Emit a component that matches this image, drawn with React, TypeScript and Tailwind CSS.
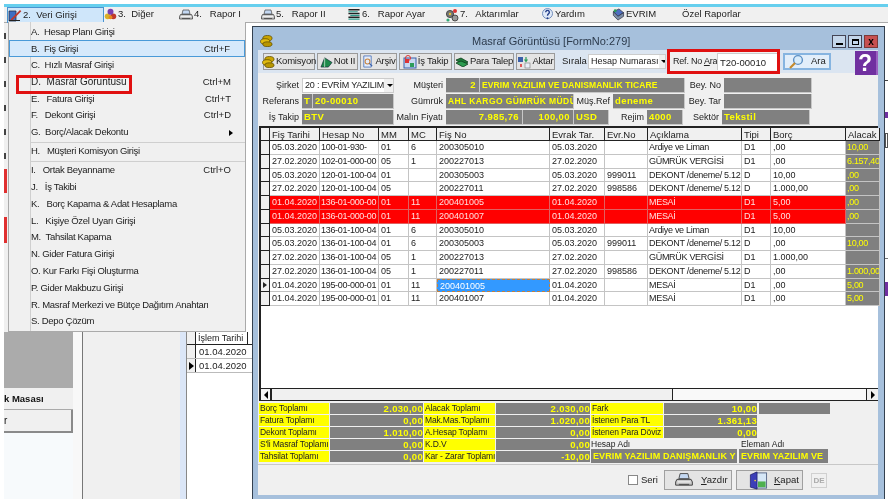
import React from "react";

const sans = "[font-family:Liberation_Sans,sans-serif]";
const bold = "[font-family:Liberation_Sans,sans-serif] font-bold";

const Printer = ({ className = "w-[14px] h-[12px]" }: { className?: string }) => (
  <svg viewBox="0 0 28 24" className={`${className} shrink-0`}>
    <path d="M8 2h12l2 8H6z" fill="#c4d8f2" stroke="#444" strokeWidth="1.4" />
    <path d="M3 11h22l2 4v5H1v-5z" fill="#c9c9c9" stroke="#333" strokeWidth="1.4" />
    <path d="M4 15h20" stroke="#fff" strokeWidth="1.4" />
    <rect x="6" y="18" width="16" height="2" fill="#555" />
  </svg>
);

const PencilIcon = () => (
  <svg viewBox="0 0 14 14" className="w-[14px] h-[14px] shrink-0">
    <path d="M1 3h7v10H1z" fill="#3d6fc4" stroke="#223" strokeWidth=".7" />
    <path d="M3 11l9-9 1.3 1.3-9 9L2 13z" fill="#c0392b" />
    <path d="M1 12.5h11" stroke="#222" strokeWidth="1" />
  </svg>
);

const Balls = () => (
  <svg viewBox="0 0 14 14" className="w-[13px] h-[13px] shrink-0">
    <circle cx="4" cy="9" r="3.2" fill="#d9b02a" />
    <circle cx="10" cy="9" r="3.2" fill="#c0392b" />
    <circle cx="7" cy="4" r="3.2" fill="#7a3fb0" />
    <circle cx="7" cy="10" r="2" fill="#e88a1f" />
  </svg>
);

const Stack = () => (
  <svg viewBox="0 0 14 14" className="w-[14px] h-[13px] shrink-0">
    <path d="M1 2h12M1 6h12M1 10h12" stroke="#222" strokeWidth="1.6" />
    <path d="M1 4h10M3 8h10M1 12h12" stroke="#2e9c8a" strokeWidth="1.2" />
  </svg>
);

const Gears = () => (
  <svg viewBox="0 0 14 14" className="w-[14px] h-[14px] shrink-0">
    <circle cx="5" cy="6" r="3.6" fill="#777" stroke="#333" strokeWidth=".8" />
    <circle cx="10" cy="10" r="3" fill="#999" stroke="#333" strokeWidth=".8" />
    <circle cx="10" cy="3" r="2" fill="#d33" />
    <circle cx="3" cy="12" r="1.6" fill="#3a7" />
    <circle cx="5" cy="6" r="1.2" fill="#e5c33c" />
  </svg>
);

const HelpIcon = () => (
  <svg viewBox="0 0 14 14" className="w-[13px] h-[13px] shrink-0">
    <circle cx="7" cy="6" r="5.4" fill="#dfe9f8" stroke="#6b88b8" />
    <path d="M5 4.5a2 2 0 1 1 3 1.8c-.8.5-1 1-1 2" fill="none" stroke="#27408b" strokeWidth="1.5" />
    <circle cx="7" cy="11" r="1" fill="#27408b" />
  </svg>
);

const BookIcon = () => (
  <svg viewBox="0 0 14 14" className="w-[14px] h-[13px] shrink-0">
    <path d="M2 4l6-3 5 4-6 4z" fill="#4f6fc0" stroke="#223" strokeWidth=".7" />
    <path d="M2 4v4l5 5 6-4V5L7 9z" fill="#7d8fa8" stroke="#223" strokeWidth=".7" />
    <circle cx="4" cy="3" r="1.6" fill="#2d9c5a" />
  </svg>
);

const Coins = ({ className = "w-[13px] h-[12px]" }: { className?: string }) => (
  <svg viewBox="0 0 14 13" className={`${className} shrink-0`}>
    <ellipse cx="8" cy="3.5" rx="5" ry="3" fill="#c9a400" stroke="#5c4a00" strokeWidth=".8" />
    <ellipse cx="5.5" cy="7" rx="5" ry="3" fill="#e0bb10" stroke="#5c4a00" strokeWidth=".8" />
    <ellipse cx="8" cy="10" rx="5" ry="2.6" fill="#b89600" stroke="#5c4a00" strokeWidth=".8" />
  </svg>
);

const TentIcon = () => (
  <svg viewBox="0 0 14 13" className="w-[13px] h-[12px] shrink-0">
    <path d="M1 12L5 2l8 5-4 5z" fill="#1f8a4c" stroke="#123" strokeWidth=".7" />
    <path d="M5 2v10" stroke="#cfe8d8" strokeWidth=".8" />
  </svg>
);

const DocIcon = () => (
  <svg viewBox="0 0 14 14" className="w-[13px] h-[13px] shrink-0">
    <path d="M3 1h8v12H3z" fill="#e4ecfa" stroke="#5a7ec0" />
    <circle cx="7" cy="7" r="2.6" fill="none" stroke="#c9823a" strokeWidth="1.1" />
    <path d="M9 9l3 3" stroke="#3a5fa8" strokeWidth="1.4" />
  </svg>
);

const GridIcon = () => (
  <svg viewBox="0 0 14 14" className="w-[14px] h-[14px] shrink-0">
    <rect x="1" y="3" width="12" height="10" fill="#c8d8f0" stroke="#3a5fa8" />
    <rect x="2" y="4" width="4" height="4" fill="#d33" />
    <rect x="7" y="8" width="4" height="4" fill="#2d9c5a" />
    <circle cx="5" cy="3" r="2.5" fill="none" stroke="#d33" />
  </svg>
);

const MoneyIcon = () => (
  <svg viewBox="0 0 14 10" className="w-[14px] h-[10px] shrink-0">
    <path d="M1 3l5-2 7 4-5 3z" fill="#1d7a3a" stroke="#0c3d1c" strokeWidth=".8" />
    <path d="M1 6l5-2 7 3-5 3z" fill="#2c9c50" stroke="#0c3d1c" strokeWidth=".8" />
  </svg>
);

const TransferIcon = () => (
  <svg viewBox="0 0 14 14" className="w-[14px] h-[14px] shrink-0">
    <rect x="1" y="2" width="5" height="5" fill="#3a5fa8" />
    <rect x="8" y="8" width="5" height="5" fill="#e9eef8" stroke="#777" strokeWidth=".6" />
    <path d="M9 2v4M7.5 4.5L9 6.5l1.5-2" stroke="#2d9c5a" fill="none" strokeWidth="1.2" />
    <path d="M4 9v3" stroke="#d33" strokeWidth="1.6" />
  </svg>
);

const Magnifier = () => (
  <svg viewBox="0 0 16 16" className="w-[16px] h-[16px] shrink-0">
    <circle cx="10" cy="6" r="4.4" fill="#d8ecfb" stroke="#5d90c4" strokeWidth="1.4" />
    <path d="M7 9l-5 5" stroke="#c58a2c" strokeWidth="2.2" />
  </svg>
);

const Door = () => (
  <svg viewBox="0 0 20 20" className="w-[20px] h-[19px] shrink-0">
    <rect x="7" y="2" width="12" height="16" fill="#d5e6f6" stroke="#5a6a8a" />
    <rect x="10" y="11" width="8" height="6" fill="#4fb04f" />
    <path d="M2 4l7-3v18l-7-2z" fill="#3b3fb8" stroke="#20226b" strokeWidth=".8" />
    <circle cx="7" cy="10" r=".9" fill="#f0d040" />
  </svg>
);

const menuBar = [
  { w: "w-[97px]", icon: <PencilIcon />, label: "2.  Veri Girişi", active: true },
  { w: "w-[75px]", icon: <Balls />, label: "3.  Diğer" },
  { w: "w-[82px]", icon: <Printer />, label: "4.   Rapor I" },
  { w: "w-[86px]", icon: <Printer />, label: "5.   Rapor II" },
  { w: "w-[98px]", icon: <Stack />, label: "6.   Rapor Ayar" },
  { w: "w-[96px]", icon: <Gears />, label: "7.   Aktarımlar" },
  { w: "w-[70px]", icon: <HelpIcon />, label: "Yardım" },
  { w: "w-[71px]", icon: <BookIcon />, label: "EVRIM" },
  { w: "w-[90px]", icon: null, label: "Özel Raporlar" },
];

type MenuEntry = { label: string; key?: string; sub?: boolean; hot?: boolean; sepAfter?: boolean; wide?: boolean };

const menuItems: MenuEntry[] = [
  { label: "A.  Hesap Planı Girişi" },
  { label: "B.  Fiş Girişi", key: "Ctrl+F", hot: true },
  { label: "C.  Hızlı Masraf Girişi" },
  { label: "D.  Masraf Görüntüsü", key: "Ctrl+M", wide: true },
  { label: "E.   Fatura Girişi", key: "Ctrl+T" },
  { label: "F.   Dekont Girişi", key: "Ctrl+D" },
  { label: "G.  Borç/Alacak Dekontu", sub: true, sepAfter: true },
  { label: "H.   Müşteri Komisyon Girişi", sepAfter: true },
  { label: "I.   Ortak Beyanname", key: "Ctrl+O" },
  { label: "J.   İş Takibi" },
  { label: "K.   Borç Kapama & Adat Hesaplama" },
  { label: "L.   Kişiye Özel Uyarı Girişi" },
  { label: "M.  Tahsilat Kapama" },
  { label: "N. Gider Fatura Girişi" },
  { label: "O. Kur Farkı Fişi Oluşturma" },
  { label: "P. Gider Makbuzu Girişi" },
  { label: "R. Masraf Merkezi ve Bütçe Dağıtım Anahtarı" },
  { label: "S. Depo Çözüm" },
];

const dek = "DEKONT /deneme/ 5.12";
const rows = [
  ["05.03.2020", "100-01-930-", "01", "6", "200305010", "05.03.2020", "", "Ardiye ve Liman", "D1", ",00", "10,00"],
  ["27.02.2020", "102-01-000-00", "05", "1", "200227013", "27.02.2020", "", "GÜMRÜK VERGİSİ", "D1", ",00", "6.157,40"],
  ["05.03.2020", "120-01-100-04", "01", "", "200305003", "05.03.2020", "999011", dek, "D", "10,00", ",00"],
  ["27.02.2020", "120-01-100-04", "05", "", "200227011", "27.02.2020", "998586", dek, "D", "1.000,00", ",00"],
  ["01.04.2020", "136-01-000-00", "01", "11", "200401005", "01.04.2020", "", "MESAİ", "D1", "5,00", ",00"],
  ["01.04.2020", "136-01-000-00", "01", "11", "200401007", "01.04.2020", "", "MESAİ", "D1", "5,00", ",00"],
  ["05.03.2020", "136-01-100-04", "01", "6", "200305010", "05.03.2020", "", "Ardiye ve Liman", "D1", "10,00", ""],
  ["05.03.2020", "136-01-100-04", "01", "6", "200305003", "05.03.2020", "999011", dek, "D", ",00", "10,00"],
  ["27.02.2020", "136-01-100-04", "05", "1", "200227013", "27.02.2020", "", "GÜMRÜK VERGİSİ", "D1", "1.000,00", ""],
  ["27.02.2020", "136-01-100-04", "05", "1", "200227011", "27.02.2020", "998586", dek, "D", ",00", "1.000,00"],
  ["01.04.2020", "195-00-000-01", "01", "11", "200401005", "01.04.2020", "", "MESAİ", "D1", ",00", "5,00"],
  ["01.04.2020", "195-00-000-01", "01", "11", "200401007", "01.04.2020", "", "MESAİ", "D1", ",00", "5,00"],
];
const headers = ["Fiş Tarihi", "Hesap No", "MM", "MC", "Fiş No", "Evrak Tar.", "Evr.No", "Açıklama", "Tipi", "Borç", "Alacak"];
const gridCols = "grid grid-cols-[9px_50px_59px_30px_28px_113px_55px_43px_94px_29px_75px_34px]";

const Field = ({
  w,
  text,
  right,
  size = "text-[9.5px] tracking-[0.4px]",
}: {
  w: string;
  text?: string;
  right?: boolean;
  size?: string;
}) => (
  <div
    className={`${w} ${bold} ${right ? "text-right pr-[3px]" : "pl-[2px]"} ${size} h-[15px] leading-[14px] bg-[#808080] text-[#ffff00] border-b border-r border-[#c8c8c8] overflow-hidden whitespace-nowrap shrink-0`}
  >
    {text}
  </div>
);

const Label = ({ w, text }: { w: string; text: string }) => (
  <div className={`${w} text-right pr-[3px] text-[9px] leading-[15px] shrink-0 whitespace-nowrap`}>{text}</div>
);

const ToolBtn = ({ w, icon, text }: { w: string; icon: React.ReactNode; text: string }) => (
  <div className={`${w} h-[17px] flex items-center justify-center gap-[1px] bg-[#e4e4e4] border border-[#9a9a9a] text-[9.5px] tracking-[-0.2px] whitespace-nowrap`}>
    {icon}
    <span>{text}</span>
  </div>
);

const summary = [
  ["Borç Toplamı", "2.030,00", "Alacak Toplamı", "2.030,00", "Fark", "10,00"],
  ["Fatura Toplamı", "0,00", "Mak.Mas.Toplamı", "1.020,00", "İstenen Para TL", "1.361,13"],
  ["Dekont Toplamı", "1.010,00", "A.Hesap Toplamı", "0,00", "İstenen Para Döviz", "0,00"],
  ["S'li Masraf Toplamı", "0,00", "K.D.V", "0,00", "", ""],
  ["Tahsilat Toplamı", "0,00", "Kar - Zarar Toplamı", "-10,00", "", ""],
];

const YellowCell = ({ w, text }: { w: string; text: string }) => (
  <div className={`${w} h-[11px] leading-[11px] bg-[#ffff00] text-[#222] text-[8.5px] tracking-[-0.15px] pl-[1px] whitespace-nowrap overflow-hidden shrink-0`}>{text}</div>
);

const GrayCell = ({ w, text }: { w: string; text: string }) => (
  <div className={`${w} h-[11px] leading-[11px] bg-[#808080] text-[#ffff00] ${bold} text-[9.5px] tracking-[0.3px] text-right whitespace-nowrap overflow-hidden shrink-0`}>{text}</div>
);

export default function App() {
  return (
    <div className={`relative w-[888px] h-[499px] overflow-hidden bg-white ${sans} text-[10px] text-[#222] blur-[0.2px]`}>
      {/* window behind the menu */}
      <div className="absolute left-[4px] top-[22px] w-[248px] h-[477px] flex bg-[#f0f0f0]">
        <div className="w-[69px] flex flex-col">
          <div className="flex flex-col gap-[18px] pt-[11px] shrink-0 h-[310px]">
            {[0, 1, 2, 3, 4, 5].map((i) => (
              <div key={i} className="w-[2px] h-[6px] bg-[#444]" />
            ))}
            <div className="w-[3px] h-[24px] bg-[#e03030] -mt-[8px]" />
            <div className="w-[3px] h-[26px] bg-[#e03030] mt-[6px]" />
          </div>
          <div className="h-[56px] bg-[#ababab]" />
          <div className={`h-[22px] bg-[#f0f0f0] border-b border-[#aaa] ${bold} text-[9.5px] leading-[22px] whitespace-nowrap text-[#111]`}>k Masası</div>
          <div className="h-[23px] bg-[#f0f0f0] border-b-2 border-r-2 border-[#8a8a8a] leading-[22px] text-[#111]">r</div>
          <div className="flex-1 bg-[#f7fafc]" />
        </div>
        <div className="w-[10px] bg-[#f8f8f8] border-r border-[#777]" />
        <div className="w-[97px]" />
        <div className="w-[6px] bg-[#dbe6f7]" />
        <div className="flex-1 bg-white border-l border-[#888] pt-[310px]">
          <div className="flex h-[13px] leading-[13px] border-b border-[#222] text-[9px]">
            <div className="w-[9px] bg-[#f0f0f0] border-r border-[#222]" />
            <div className="pl-[2px] whitespace-nowrap border-r border-[#222] w-[52px] overflow-hidden">İşlem Tarihi</div>
          </div>
          {[0, 1].map((i) => (
            <div key={i} className="flex h-[14px] leading-[14px] border-b border-[#bbb] text-[9.5px]">
              <div className="w-[9px] bg-[#f0f0f0] border-r border-[#222] flex items-center justify-center">
                {i === 1 && <div className="border-y-[4px] border-y-transparent border-l-[5px] border-l-black" />}
              </div>
              <div className="pl-[3px]">01.04.2020</div>
            </div>
          ))}
        </div>
      </div>

      {/* cyan strip and menu bar */}
      <div className="absolute left-[4px] top-[4px] right-0 h-[3px] bg-[#66cfee]" />
      <div className="absolute left-[4px] top-[7px] right-0 h-[16px] bg-[#f0f0f0] border-b border-[#aaa] flex pl-[3px] text-[9.5px]">
        {menuBar.map((m) => (
          <div
            key={m.label}
            className={`${m.w} flex items-center gap-[1px] shrink-0 whitespace-pre ${m.active ? "bg-[#cfe6fa] border border-[#4a93cf] h-[16px]" : ""}`}
          >
            {m.icon}
            <span>{m.label}</span>
          </div>
        ))}
      </div>

      {/* main window */}
      <div className="absolute left-[252px] top-[26px] w-[633px] h-[473px] bg-[#a6c0dc] border-l border-t border-r border-[#33404f] flex flex-col pl-[5px] pr-[6px] pb-[4px]">
        <div className="h-[23px] flex items-center relative shrink-0">
          <div className="ml-[2px] mt-[4px]"><Coins /></div>
          <div className="absolute left-[214px] top-[6px] text-[11px] leading-[16px] text-[#2c3a4c] whitespace-nowrap">Masraf Görüntüsü [FormNo:279]</div>
          <div className="absolute right-0 top-[8px] flex gap-[2px]">
            <div className="w-[14px] h-[13px] bg-[#c4d6ea] border border-[#445] flex items-end justify-center pb-[2px]"><div className="w-[7px] h-[2px] bg-black" /></div>
            <div className="w-[14px] h-[13px] bg-[#c4d6ea] border border-[#445] flex items-center justify-center"><div className="w-[7px] h-[6px] border border-t-2 border-black" /></div>
            <div className="w-[14px] h-[13px] bg-[#c75050] border border-[#7a3a3a] text-black text-[10px] leading-[11px] font-bold text-center">x</div>
          </div>
        </div>

        <div className="flex-1 min-h-0 bg-[#f0f0f0] flex flex-col">
          {/* toolbar */}
          <div className="h-[23px] relative flex items-center pl-[5px] gap-[2px] shrink-0 bg-[#dbe5f1]">
            <ToolBtn w="w-[52px]" icon={<Coins />} text="Komisyon" />
            <ToolBtn w="w-[41px]" icon={<TentIcon />} text="Not II" />
            <ToolBtn w="w-[37px]" icon={<DocIcon />} text="Arşiv" />
            <ToolBtn w="w-[53px]" icon={<GridIcon />} text="İş Takip" />
            <ToolBtn w="w-[60px]" icon={<MoneyIcon />} text="Para Talep" />
            <ToolBtn w="w-[39px]" icon={<TransferIcon />} text="Aktar" />
            <span className="ml-[5px] w-[24px] text-[9.5px]">Sırala</span>
            <div className="w-[78px] h-[15px] bg-white border border-[#ccc] flex items-center text-[9px] pl-[2px] whitespace-nowrap overflow-hidden">
              <span className="flex-1">Hesap Numarası</span>
              <span className="w-[11px] h-full bg-[#f0f0f0] flex items-center justify-center shrink-0"><span className="border-x-[3px] border-x-transparent border-t-[3px] border-t-black" /></span>
            </div>
            <div className="-ml-[1px] w-[113px] h-[25px] border-[3px] border-[#e01010] bg-[#f0f0f0] flex items-center text-[9px] pl-[3px] whitespace-nowrap -my-[1px]">
              <span className="w-[44px] shrink-0 tracking-[-0.2px]">Ref. No <span className="underline">A</span>ra</span>
              <div className="flex-1 h-[17px] bg-white pl-[2px] leading-[17px] border-t border-l border-[#ccc] text-[9.5px]">T20-00010</div>
            </div>
            <div className="ml-[1px] w-[48px] h-[17px] bg-[#e2eefa] border-2 border-[#86b4e0] flex items-center pl-[3px] gap-[7px] text-[9.5px]">
              <Magnifier />
              <span>Ara</span>
            </div>
            <div className={`absolute right-0 top-[1px] w-[23px] h-[24px] bg-[#7030a0] text-white ${bold} text-[23px] leading-[24px] pl-[3px] border-r-2 border-[#9a60c0] z-10`}>?</div>
          </div>

          {/* header form */}
          <div className="h-[53px] flex flex-col pt-[5px] gap-[1px] shrink-0">
            <div className="flex">
              <Label w="w-[44px]" text="Şirket" />
              <div className="w-[92px] h-[15px] bg-white border border-[#ccc] flex items-center pl-[2px] text-[9px] tracking-[-0.2px] whitespace-nowrap overflow-hidden shrink-0">
                <span className="flex-1">20 : EVRİM YAZILIM</span>
                <span className="w-[11px] h-full bg-[#f0f0f0] flex items-center justify-center shrink-0"><span className="border-x-[3px] border-x-transparent border-t-[3px] border-t-black" /></span>
              </div>
              <Label w="w-[52px]" text="Müşteri" />
              <Field w="w-[34px]" text="2" right />
              <Field w="w-[205px]" text="EVRIM YAZILIM VE DANISMANLIK TICARE" size="text-[8.5px] tracking-[0.1px]" />
              <Label w="w-[39px]" text="Bey. No" />
              <Field w="w-[88px]" />
            </div>
            <div className="flex">
              <Label w="w-[44px]" text="Referans" />
              <Field w="w-[11px]" text="T" />
              <Field w="w-[81px]" text="20-00010" />
              <Label w="w-[52px]" text="Gümrük" />
              <Field w="w-[128px]" text="AHL KARGO GÜMRÜK MÜDÜ" size="text-[8.5px] tracking-[0.4px]" />
              <Label w="w-[39px]" text="Müş.Ref" />
              <Field w="w-[72px]" text="deneme" />
              <Label w="w-[39px]" text="Bey. Tar" />
              <Field w="w-[88px]" />
            </div>
            <div className="flex">
              <Label w="w-[44px]" text="İş Takip" />
              <Field w="w-[92px]" text="BTV" />
              <Label w="w-[52px]" text="Malın Fiyatı" />
              <Field w="w-[77px]" text="7.985,76" right />
              <Field w="w-[51px]" text="100,00" right />
              <Field w="w-[35px]" text="USD" />
              <Label w="w-[38px]" text="Rejim" />
              <Field w="w-[36px]" text="4000" />
              <Label w="w-[39px]" text="Sektör" />
              <Field w="w-[88px]" text="Tekstil" />
            </div>
          </div>

          {/* grid */}
          <div className="ml-[1px] h-[275px] bg-white border-t-2 border-l-2 border-[#222] shrink-0 flex flex-col">
            <div className={`${gridCols} h-[13px] leading-[13px] text-[9.5px] shrink-0`}>
              <div className="bg-[#f0f0f0] border-r border-b border-[#222]" />
              {headers.map((h) => (
                <div key={h} className="bg-[#f0f0f0] border-r border-b border-[#222] pl-[2px] overflow-hidden whitespace-nowrap">{h}</div>
              ))}
            </div>
            {rows.map((row, ri) => {
              const red = ri === 4 || ri === 5;
              return (
                <div key={ri} className={`${gridCols} h-[13.75px] leading-[13px] text-[9px] shrink-0`}>
                  <div className="bg-[#f0f0f0] border-r border-b border-[#222] flex items-center justify-center">
                    {ri === 10 && <div className="border-y-[3px] border-y-transparent border-l-[4px] border-l-[#222]" />}
                  </div>
                  {row.map((c, ci) => {
                    const alacak = ci === 10;
                    const selected = ri === 10 && ci === 4;
                    const narrow = ci === 1 || ci === 7 || alacak;
                    let tone = "border-[#c4c4c4]";
                    if (red) tone = "bg-[#ff0000] text-[#ffe0e0] border-[#e06060]";
                    if (alacak) tone = "bg-[#808080] text-[#ffff00] border-[#c4c4c4]";
                    if (selected) tone = "bg-[#3399ff] text-white border-dashed border-[#c08040] border-l border-t";
                    return (
                      <div key={ci} className={`${tone} ${narrow ? "tracking-[-0.3px] pl-[1px]" : "pl-[2px]"} border-r border-b overflow-hidden whitespace-nowrap`}>{c}</div>
                    );
                  })}
                </div>
              );
            })}
            <div className="flex-1" />
            {/* horizontal scrollbar */}
            <div className="h-[13px] flex bg-[#f4f4f4] border-y border-[#222] shrink-0">
              <div className="w-[11px] border-r-2 border-[#222] flex items-center justify-center"><div className="border-y-[4px] border-y-transparent border-r-[4px] border-r-black" /></div>
              <div className="w-[401px] border-r border-[#222] bg-[#f0f0f0]" />
              <div className="flex-1 bg-[#f9f9f9]" />
              <div className="w-[12px] border-l border-[#222] bg-[#f0f0f0] flex items-center justify-center"><div className="border-y-[4px] border-y-transparent border-l-[4px] border-l-black" /></div>
            </div>
          </div>

          {/* totals */}
          <div className="ml-[1px] mt-[2px] h-[61px] shrink-0 flex flex-col gap-[1px]">
            {summary.map((s, i) => (
              <div key={i} className="flex gap-[1px] h-[11px]">
                <YellowCell w="w-[70px]" text={s[0]} />
                <GrayCell w="w-[93px]" text={s[1]} />
                <YellowCell w="w-[71px]" text={s[2]} />
                <GrayCell w="w-[94px]" text={s[3]} />
                {i < 3 && <YellowCell w="w-[72px]" text={s[4]} />}
                {i < 3 && <GrayCell w="w-[93px]" text={s[5]} />}
                {i === 0 && <div className="ml-[1px] w-[71px] bg-[#808080]" />}
                {i === 3 && <div className="w-[149px] text-[8.5px] leading-[11px]">Hesap Adı</div>}
                {i === 3 && <div className="text-[8.5px] leading-[11px]">Eleman  Adı</div>}
                {i === 4 && (
                  <div className={`flex gap-[2px] -mt-[2px] text-[9px] ${bold} text-[#ffff00] tracking-[0.1px]`}>
                    <div className="w-[146px] h-[14px] leading-[14px] bg-[#808080] overflow-hidden whitespace-nowrap pl-[2px]">EVRIM YAZILIM DANIŞMANLIK Y</div>
                    <div className="w-[89px] h-[14px] leading-[14px] bg-[#808080] overflow-hidden whitespace-nowrap pl-[2px]">EVRIM YAZILIM VE</div>
                  </div>
                )}
              </div>
            ))}
          </div>

          {/* bottom buttons */}
          <div className="flex-1 border-t border-[#c8c8c8] flex items-center pl-[370px] text-[9.5px]">
            <div className="w-[10px] h-[10px] bg-white border border-[#888]" />
            <span className="ml-[3px] w-[14px]">Seri</span>
            <div className="ml-[9px] w-[68px] h-[20px] bg-[#e4e4e4] border border-[#a0a0a0] flex items-center pl-[10px] gap-[8px]">
              <Printer className="w-[18px] h-[16px]" />
              <span><span className="underline">Y</span>azdır</span>
            </div>
            <div className="ml-[4px] w-[67px] h-[20px] bg-[#e4e4e4] border border-[#a0a0a0] flex items-center pl-[11px] gap-[6px]">
              <Door />
              <span><span className="underline">K</span>apat</span>
            </div>
            <div className={`ml-[8px] w-[16px] h-[15px] bg-[#f0f0f0] border border-[#d0d0d0] text-[#aaa] ${bold} text-[8px] leading-[14px] text-center`}>DE</div>
          </div>
        </div>
      </div>

      {/* dropdown */}
      <div className="absolute left-[8px] top-[22px] w-[238px] h-[310px] bg-[#f0f0f0] border border-[#aaa] border-t-0 pt-[1.5px] flex flex-col text-[9.5px]">
        <div className="absolute left-[21px] top-0 bottom-0 w-[1px] bg-[#cfcfcf]" />
        {menuItems.map((m) => (
          <div key={m.label}>
            <div className={`relative h-[16.8px] leading-[16px] pr-[14px] flex justify-between whitespace-pre ${m.hot ? "pl-[21px] bg-[#d6e9fb] border border-[#4a9ad8]" : "pl-[22px]"}`}>
              <span className={m.wide ? "text-[10px]" : "tracking-[-0.3px]"}>{m.label}</span>
              {m.key && <span>{m.key}</span>}
              {m.sub && <span className="self-center border-y-[3px] border-y-transparent border-l-[4px] border-l-black mr-[-2px]" />}
            </div>
            {m.sepAfter && <div className="h-[1px] my-[0.6px] ml-[22px] bg-[#cfcfcf]" />}
          </div>
        ))}
      </div>
      {/* annotation box around Masraf Görüntüsü */}
      <div className="absolute left-[16px] top-[75px] w-[116px] h-[19px] border-[3px] border-[#e01010]" />

      {/* neighbour window peeking on the right */}
      <div className="absolute right-0 top-[80px] w-[3px] flex flex-col">
        <div className="h-[1px] bg-[#444]" />
        <div className="h-[31px]" />
        <div className="h-[6px] bg-[#7030a0]" />
        <div className="h-[15px]" />
        <div className="h-[15px] border border-[#555]" />
        <div className="h-[110px]" />
        <div className="h-[1px] bg-[#777]" />
        <div className="h-[23px]" />
        <div className="h-[14px] bg-[#7030a0]" />
      </div>
    </div>
  );
}
